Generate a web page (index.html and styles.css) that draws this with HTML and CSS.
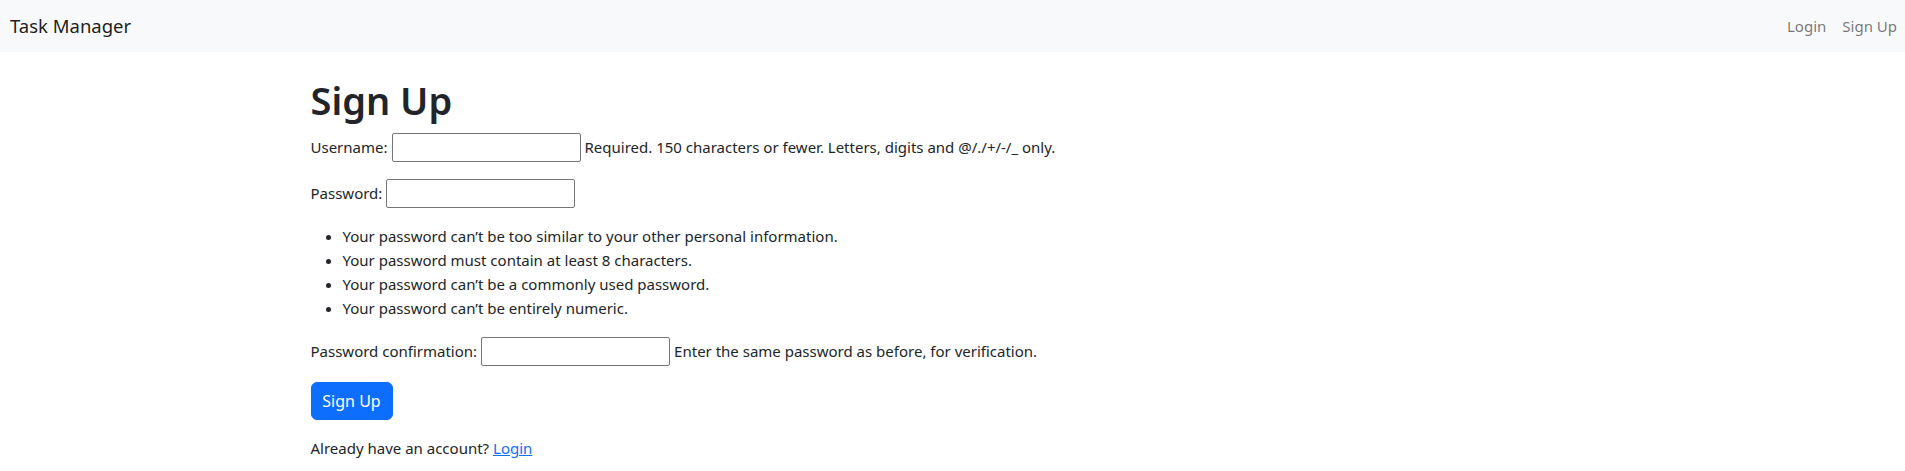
FILE: index.html
```html
<!DOCTYPE html>
<html lang="en">
<head>
<meta charset="utf-8">
<title>Sign Up</title>
<link rel="stylesheet" href="styles.css">
</head>
<body>
<nav class="navbar">
  <a class="brand" href="#">Task Manager</a>
  <div class="nav-links">
    <a class="nav-link" href="#">Login</a>
    <a class="nav-link" href="#">Sign Up</a>
  </div>
</nav>
<main class="container">
  <h1 class="title">Sign Up</h1>
  <form class="form">
    <p class="field">
      <label class="label" for="id_username">Username:</label>
      <input class="input" type="text" id="id_username">
      <span class="help">Required. 150 characters or fewer. Letters, digits and @/./+/-/_ only.</span>
    </p>
    <p class="field">
      <label class="label" for="id_password1">Password:</label>
      <input class="input" type="password" id="id_password1">
    </p>
    <ul class="rules">
      <li>Your password can’t be too similar to your other personal information.</li>
      <li>Your password must contain at least 8 characters.</li>
      <li>Your password can’t be a commonly used password.</li>
      <li>Your password can’t be entirely numeric.</li>
    </ul>
    <p class="field">
      <label class="label" for="id_password2">Password confirmation:</label>
      <input class="input" type="password" id="id_password2">
      <span class="help">Enter the same password as before, for verification.</span>
    </p>
    <button class="btn" type="submit">Sign Up</button>
  </form>
  <p class="account">Already have an account? <a class="link" href="#">Login</a></p>
</main>
</body>
</html>
```

FILE: styles.css
```css
* {
  box-sizing: border-box;
}

body {
  margin: 0;
  font-family: "Segoe UI", "Noto Sans", sans-serif;
  font-size: 15px;
  line-height: 24px;
  color: #212529;
  background: #fff;
}

.navbar {
  height: 52px;
  background: #f8f9fa;
  display: flex;
  align-items: center;
  justify-content: space-between;
  padding: 0 0 0 10px;
}

.brand {
  font-size: 18.5px;
  line-height: 30px;
  color: rgba(0, 0, 0, 0.9);
  text-decoration: none;
}

.nav-links {
  display: flex;
}

.nav-link {
  padding: 0 8px;
  color: rgba(0, 0, 0, 0.55);
  text-decoration: none;
}

.container {
  max-width: 1320px;
  margin: 24px auto 0;
  padding: 0 18px;
}

.title {
  margin: 0 0 8px;
  font-size: 38px;
  line-height: 48px;
  font-weight: 600;
}

.form {
  margin: 0;
}

.field {
  margin: 0 0 16px;
  min-height: 30px;
  display: flex;
  align-items: center;
  gap: 4px;
}

.input {
  width: 189px;
  height: 29px;
  margin: 0;
  border: 1px solid #767676;
  border-radius: 2px;
  padding: 1px 2px;
  font: inherit;
  background: #fff;
}

.rules {
  margin: 0 0 16px;
  padding-left: 32px;
}

.btn {
  display: block;
  width: 82px;
  height: 38px;
  padding: 6px 0;
  border: 1px solid #0d6efd;
  border-radius: 6px;
  background: #0d6efd;
  color: #fff;
  font: inherit;
  font-size: 16px;
  line-height: 24px;
  text-align: center;
}

.account {
  margin: 16px 0 0;
}

.link {
  color: #0d6efd;
}
```
